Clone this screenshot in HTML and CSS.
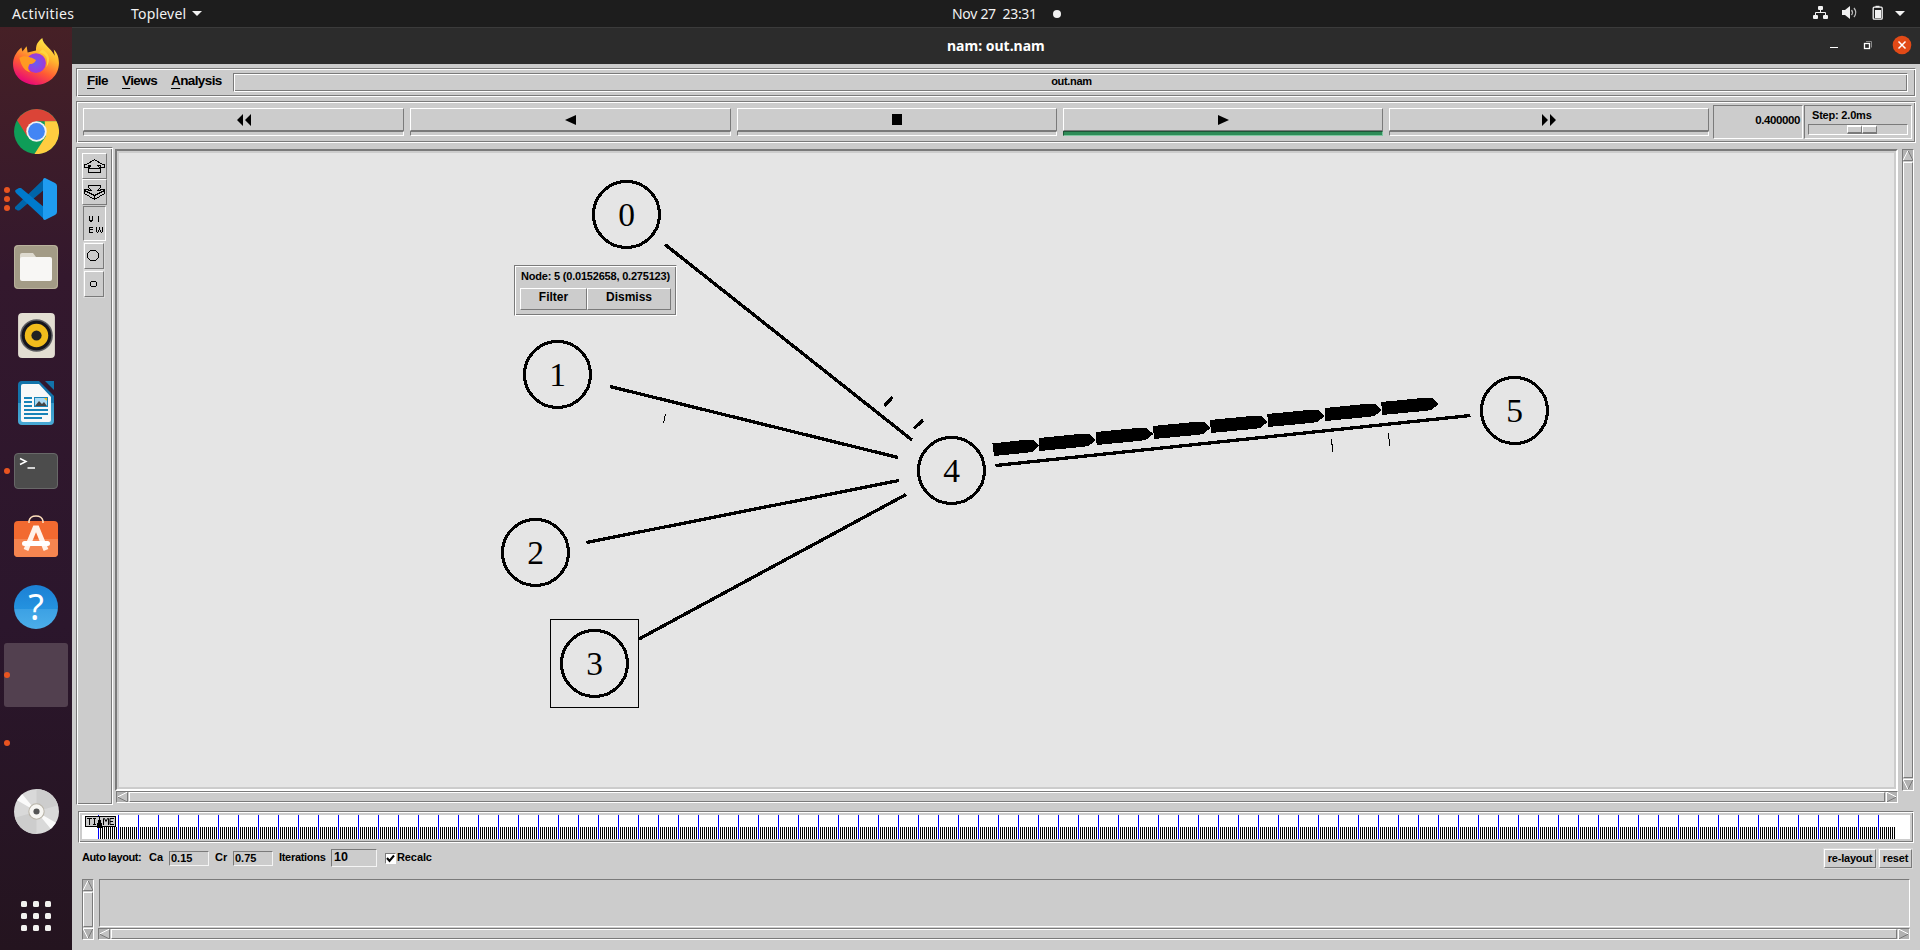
FILE: index.html
```html
<!DOCTYPE html>
<html lang="en">
<head>
<meta charset="utf-8">
<title>nam: out.nam</title>
<link rel="stylesheet" href="styles.css">
</head>
<body>
<header class="topbar">
  <span class="activities">Activities</span>
  <span class="appmenu">Toplevel</span><svg class="caret" width="10" height="5"><path d="M0 0h10L5 5z" fill="#f2f2f2"/></svg>
  <span class="clock">Nov 27&nbsp; 23:31</span><span class="notice"></span>
  <svg class="tray" width="90" height="16" viewBox="0 0 90 16">
    <g fill="#f2f2f2"><rect x="5" y="1" width="5" height="4" rx="1"/><rect x="0" y="10" width="5" height="4" rx="1"/><rect x="10" y="10" width="5" height="4" rx="1"/><path d="M29 5h3l5-4v13l-5-4h-3zM82 6h10l-5 5z"/><rect x="62" y="5" width="6" height="8"/></g>
    <path d="M7.500 5v3M2.500 10V7.500h10V10" fill="none" stroke="#f2f2f2"/>
    <path d="M38.500 5q2 2.500 0 5M41 3q3.500 4.500 0 9" fill="none" stroke="#bbb" stroke-width="1.300"/>
    <rect x="60.200" y="2.200" width="9" height="12" rx="1" fill="none" stroke="#f2f2f2" stroke-width="1.300"/><path d="M62.500 .8h4v1.500h-4z" fill="#f2f2f2"/>
  </svg>
</header>
<div class="desktop">
<nav class="dock">
  <div class="app"><svg class="fox" viewBox="0 0 44 46" width="46" height="48">
    <defs><linearGradient id="ff" x1=".8" y1="0" x2=".3" y2="1"><stop offset="0" stop-color="#fff44f"/><stop offset=".35" stop-color="#ffb72e"/><stop offset=".65" stop-color="#ff5b34"/><stop offset="1" stop-color="#e6007e"/></linearGradient><radialGradient id="fp"><stop offset="0" stop-color="#6a5cf0"/><stop offset="1" stop-color="#a238d8"/></radialGradient></defs>
    <path d="M28 0c-5 4-6 7-6 12l-8 2-1-6-4 5-1-4C2 14 0 20 0 25c0 12 10 20 22 20s22-9 22-21c0-6-2-10-5-13l1 6C36 9 29 7 28 0z" fill="url(#ff)"/>
    <circle cx="22" cy="24" r="9.500" fill="url(#fp)"/><path d="M6 19c5-3 9-1 12 0l4 2c-1 3-4 4-6 4-2 3-2 6 1 8-6-1-9-6-11-14z" fill="#ff9a22"/><path d="M25 14c7 1 9 6 7 14 5-8 2-14-4-17z" fill="#ffd53d"/></svg></div>
  <div class="app"><svg viewBox="-22 -22 44 44" width="45" height="45">
    <circle r="22" fill="#0f9d58"/><path d="M-19-11A22 22 0 0 1 19.600-10H0L-9 5z" fill="#db4437"/><path d="M19.600-10A22 22 0 0 1-2 22L9 5 8-10z" fill="#ffcd40"/><circle r="10" fill="#f1f1f1"/><circle r="8.200" fill="#4285f4"/></svg></div>
  <div class="app"><span class="dots"><i></i><i></i><i></i></span><svg viewBox="0 0 44 44" width="44" height="44">
    <path d="M1 30L31 1v11L6 33q-2 1-3 0l-2-1z" fill="#0065a9"/><path d="M1 14q0-1 4-3h2l24 20v12L2 16z" fill="#007acc"/><path d="M31 1l10 5q2 1 2 3v26q0 2-2 3l-10 5q-2 0-2-2V3q0-2 2-2z" fill="#1f9cf0"/></svg></div>
  <div class="app"><svg viewBox="0 0 44 44" width="44" height="44"><rect width="44" height="44" rx="4" fill="#a39b86"/><rect x=".5" y=".5" width="43" height="43" rx="4" fill="none" stroke="#bab29d"/><path d="M6 10q0-2 2-2h11l3 4v8H6z" fill="#dedacf"/><rect x="6" y="12" width="32" height="24" rx="2" fill="#f8f7f5"/></svg></div>
  <div class="app"><svg viewBox="0 0 36 44" width="37" height="45"><rect width="36" height="44" rx="4" fill="#e3ded2"/><circle cx="18" cy="22" r="16" fill="#5c5c60"/><circle cx="18" cy="22" r="14.500" fill="#15151d"/><circle cx="18" cy="22" r="11.500" fill="#f1bc1c"/><circle cx="18" cy="22" r="5" fill="#222"/></svg></div>
  <div class="app"><svg viewBox="0 0 36 44" width="36" height="44"><defs><linearGradient id="wr" x2="0" y2="1"><stop offset=".49" stop-color="#1373aa"/><stop offset=".5" stop-color="#3498c8"/><stop offset="1" stop-color="#49a9d5"/></linearGradient></defs><path d="M4 0h17l15 15v25q0 4-4 4H4q-4 0-4-4V4q0-4 4-4z" fill="url(#wr)"/><path d="M27 0h9v9z" fill="#1373aa"/><path d="M5 3h16l12 13v23q0 2-2 2H5q-2 0-2-2V5q0-2 2-2z" fill="#f8f8f8"/><path d="M6 17h8M6 21h8M6 25h8M6 29h24M6 33h24M6 37h18" stroke="#1883b8" stroke-width="2"/><rect x="16" y="16" width="14" height="10" fill="#1883b8"/><path d="M17 17h12v8H17z" fill="#a8d8f2"/><path d="M17 25l4-5 3 3 2-2 3 4z" fill="#444"/><path d="M26 17h3v3z" fill="#f5bd18"/></svg></div>
  <div class="app"><span class="dots"><i></i></span><svg viewBox="0 0 44 36" width="44" height="36"><rect x=".5" y=".5" width="43" height="35" rx="3.500" fill="#4c4c4c" stroke="#686868"/><path d="M6 5.500l6 3-6 3M13.500 15H21" fill="none" stroke="#fff" stroke-width="1.500"/></svg></div>
  <div class="app"><svg class="bag" viewBox="0 0 44 44" width="44" height="44"><rect y="7" width="44" height="36" rx="4" fill="#f26a30"/><path d="M0 25h44v14q0 4-4 4H4q-4 0-4-4z" fill="#f58550"/><path d="M15 9V7q1-5 7-5t7 5v2" fill="none" stroke="#ffe0bd" stroke-width="1.500"/><path d="M12 36l9-22h2l9 22" fill="none" stroke="#fff2e9" stroke-width="5"/><rect x="8" y="27" width="28" height="5" rx="2.500" fill="#fff"/></svg></div>
  <div class="app"><span class="help">?</span></div>
  <div class="app active"><span class="dots"><i></i></span></div>
  <div class="app"><span class="dots"><i></i></span></div>
  <div class="app"><svg viewBox="-22 -22 44 44" width="45" height="45"><circle r="22" fill="#d9d9d9"/><path d="M0 0V-22A22 22 0 0 1 21-6zM0 0V22A22 22 0 0 1-21 6z" fill="#cdcdcd"/><path d="M0 0L-19-11-14-17zM0 0L19 11 14 17z" fill="#fafafa"/><circle r="7.500" fill="#f7f6f3" stroke="#b8b3a7"/><circle r="3" fill="#555"/></svg></div>
  <svg class="grid9" width="30" height="30" fill="#f2f1ef"><rect width="6" height="6" rx="1.500"/><rect x="12" width="6" height="6" rx="1.500"/><rect x="24" width="6" height="6" rx="1.500"/><rect y="12" width="6" height="6" rx="1.500"/><rect x="12" y="12" width="6" height="6" rx="1.500"/><rect x="24" y="12" width="6" height="6" rx="1.500"/><rect y="24" width="6" height="6" rx="1.500"/><rect x="12" y="24" width="6" height="6" rx="1.500"/><rect x="24" y="24" width="6" height="6" rx="1.500"/></svg>
</nav>
<main class="window">
  <div class="titlebar"><span class="title">nam: out.nam</span>
    <svg class="winctl" width="83" height="20" viewBox="0 0 83 20"><path d="M0 12.500h8" stroke="#fff"/><path d="M36 6.500h5.500v6" fill="none" stroke="#888"/><rect x="34.500" y="8.500" width="5" height="5" fill="none" stroke="#fff" stroke-width="1.300"/><circle cx="72" cy="10" r="9.300" fill="#e24a17"/><path d="M68.500 6.500l7 7m0-7l-7 7" stroke="#fff" stroke-width="1.500"/></svg>
  </div>
  <div class="menubar groove">
    <span class="menu"><u>F</u>ile</span><span class="menu"><u>V</u>iews</span><span class="menu"><u>A</u>nalysis</span>
    <div class="filename groove">out.nam</div>
  </div>
  <div class="toolbar groove">
    <div class="transport">
      <div class="tb"><div class="btn"><svg width="14" height="12"><path d="M0 6l6-6v12zM8 6l6-6v12z"/></svg></div><div class="strip"></div></div>
      <div class="tb"><div class="btn"><svg width="11" height="10"><path d="M0 5l11-5v10z"/></svg></div><div class="strip"></div></div>
      <div class="tb"><div class="btn"><svg width="10" height="11"><path d="M0 0h10v11H0z"/></svg></div><div class="strip"></div></div>
      <div class="tb"><div class="btn"><svg width="11" height="10"><path d="M11 5L0 0v10z"/></svg></div><div class="strip on"></div></div>
      <div class="tb"><div class="btn"><svg width="14" height="12"><path d="M6 6L0 0v12zM14 6L8 0v12z"/></svg></div><div class="strip"></div></div>
    </div>
    <div class="time sunken">0.400000</div>
    <div class="step sunken"><span>Step: 2.0ms</span><div class="trough sunken"><div class="thumb"><i></i><i></i></div></div></div>
  </div>
  <div class="work">
    <div class="tools groove">
      <div class="tool t1"><svg width="22" height="15" viewBox="0 0 22 15"><path d="M10.500.5l8 5h2v3h-4v-2H14l2.500 4v3h-12v-3l2-4H4.500v2h-4v-3h2zM4.500 9.500h12" /></svg></div>
      <div class="tool t1 down"><svg width="22" height="16" viewBox="0 0 22 16"><path d="M4.500.5h12v2l-3 3h3v-1h4v4l-10 6-10-6v-4h4v1h3l-3-3zM.5 5.500l10 5 10-5M10.500 10v5"/></svg></div>
      <div class="tool t2"><svg width="16" height="20" viewBox="0 0 16 20"><path d="M1.500 1v4l1.500 1.500L4.500 5V1M10.500 1v6M4.500 12.500h-3v5h3M1.500 14.500h3M8.500 12v4l1 1.500 2-3 2 3 1-1.500v-4M11.500 12v3"/></svg></div>
      <div class="tool t3"><svg width="14" height="14" viewBox="0 0 14 14"><circle cx="6" cy="6.500" r="5.500"/></svg></div>
      <div class="tool t3 last"><svg width="14" height="14" viewBox="0 0 14 14"><circle cx="6.500" cy="7" r="3"/></svg></div>
    </div>
    <div class="viewport">
      <div class="canvas">
        <svg class="net" width="1775" height="634" viewBox="119 153 1775 634">
          <g class="edges"><path d="M665 244.500L912 440M610 386.500L898 457.500M586.500 542.500L899 480.500M639 639L906 494.500M995.500 465.500L1470.500 415.500"/><path d="M884.500 406l8-9M914 428.500l9-8.500"/></g>
          <path class="thin" d="M665.500 414l-2 9M1331.500 439v5l1 1v7M1388 433v5l1 1v7"/>
          <g class="nodes"><circle cx="626.500" cy="214.500" r="33"/><circle cx="557.500" cy="374.500" r="33"/><circle cx="535.500" cy="552.500" r="33"/><circle cx="594.500" cy="663.500" r="33"/><circle cx="951.500" cy="470.500" r="33"/><circle cx="1514.500" cy="410.500" r="33"/></g>
          <rect class="thin" x="550.500" y="619.500" width="88" height="88"/>
          <defs><path id="pkt" d="M0 0L41-4H51L57.500 2 50 8 43 9 1 13z"/></defs>
          <path d="M992.500 443.500L1023 440h10l6 6-7 6-8 1-30 3z"/>
          <use href="#pkt" x="1038.500" y="438"/><use href="#pkt" x="1095.700" y="432"/><use href="#pkt" x="1153" y="426"/><use href="#pkt" x="1210" y="420"/><use href="#pkt" x="1267.300" y="414"/><use href="#pkt" x="1324.500" y="408"/><use href="#pkt" x="1381.200" y="402"/>
          <g class="ids"><text x="626.500" y="226">0</text><text x="557.500" y="386">1</text><text x="535.500" y="564">2</text><text x="594.500" y="675">3</text><text x="951.500" y="482">4</text><text x="1514.500" y="422">5</text></g>
        </svg>
        <div class="popup groove"><span class="ptext">Node: 5 (0.0152658, 0.275123)</span><div class="pbtns"><button class="pf">Filter</button><button class="pd">Dismiss</button></div></div>
      </div>
      <div class="hscroll"><svg width="11" height="10"><path class="lo" d="M10.500 0v10L.5 5"/><path class="hi" d="M.5 5l10-5"/></svg><div class="bar"></div><svg width="11" height="10"><path class="lo" d="M.5 10l10-5"/><path class="hi" d="M.5 10V0l10 5"/></svg></div>
    </div>
    <div class="vscroll"><svg width="10" height="11"><path class="lo" d="M5 .5l5 10H0"/><path class="hi" d="M0 10.500l5-10"/></svg><div class="bar"></div><svg width="10" height="11"><path class="lo" d="M10 .5l-5 10"/><path class="hi" d="M10 .5H0l5 10"/></svg></div>
  </div>
  <div class="timeline groove"><div class="scale"><div class="minor"></div><div class="major"></div>
    <svg class="timetag" width="31" height="12" viewBox="0 0 31 12"><rect x=".5" y=".5" width="30" height="10" fill="#ccc" stroke="#000"/><path d="M2 2.500h5M4.500 2v7M8 2.500h3M9.500 2v7M8 8.500h3M18.500 9V2.500h1l1.500 3 1.500-3h1V9M29 2.500h-4v6h4M25 5.500h3" fill="none" stroke="#000"/><path d="M14 1h1v3h1v3h1v5h-5V7h1V4h1z"/></svg></div></div>
  <div class="layoutrow">
    <span class="l1">Auto layout:</span><span class="l2">Ca</span><span class="entry">0.15</span><span class="l3">Cr</span><span class="entry">0.75</span><span class="l4">Iterations</span><span class="entry big">10</span>
    <span class="check"><svg width="9" height="9"><path d="M1 4l2.500 3L8 1.500" fill="none" stroke="#000" stroke-width="2"/></svg></span><span class="l5">Recalc</span>
    <button class="rel">re-layout</button><button class="res">reset</button>
  </div>
  <div class="bottom">
    <div class="vscroll"><svg width="10" height="11"><path class="lo" d="M5 .5l5 10H0"/><path class="hi" d="M0 10.500l5-10"/></svg><div class="bar"></div><svg width="10" height="11"><path class="lo" d="M10 .5l-5 10"/><path class="hi" d="M10 .5H0l5 10"/></svg></div>
    <div class="notes"><div class="text sunken"></div>
      <div class="hscroll"><svg width="11" height="10"><path class="lo" d="M10.500 0v10L.5 5"/><path class="hi" d="M.5 5l10-5"/></svg><div class="bar"></div><svg width="11" height="10"><path class="lo" d="M.5 10l10-5"/><path class="hi" d="M.5 10V0l10 5"/></svg></div></div>
  </div>
</main>
</div>
</body>
</html>
```
FILE: styles.css
```css
* { box-sizing: border-box; }
body { margin: 0; width: 1920px; height: 950px; overflow: hidden; font: bold 12px "Liberation Sans", sans-serif; color: #000; background: #ccc; }
svg { display: block; flex: none; }
span, button { white-space: nowrap; }
.groove { border: 1px solid; border-color: #7a7a7a #fff #fff #7a7a7a; box-shadow: inset 1px 1px #fff, inset -1px -1px #7a7a7a; }
.sunken { border: 1px solid; border-color: #7a7a7a #fff #fff #7a7a7a; }

.topbar { height: 27px; background: #1d1d1d; color: #f2f2f2; display: flex; align-items: center; font: 14px/27px "Noto Sans", sans-serif; }
.activities { width: 119px; padding-left: 12px; letter-spacing: .4px; }
.appmenu { margin-left: 12px; width: 62px; letter-spacing: .2px; }
.caret { margin-left: -1px; }
.clock { margin-left: 750px; width: 101px; letter-spacing: -.3px; }
.notice { width: 8px; height: 8px; border-radius: 50%; background: #f2f2f2; }
.tray { margin-left: 752px; margin-top: -1px; overflow: visible; }

.desktop { display: flex; height: 923px; }
.dock { width: 72px; padding: 4px 4px 0; display: flex; flex-direction: column; gap: 4px; align-items: center; background: linear-gradient(#462026, #33182d 27%, #2b162c 65%, #24141f); }
.app { position: relative; width: 64px; height: 64px; flex: none; display: flex; align-items: center; justify-content: center; border-radius: 3px; }
.fox { margin-bottom: 2px; }
.bag { margin-bottom: 6px; }
.active { background: #52404f; }
.dots { position: absolute; left: 0; top: 0; height: 64px; display: flex; flex-direction: column; justify-content: center; gap: 3px; }
.dots i { width: 6px; height: 6px; border-radius: 50%; background: #e95420; }
.help { width: 44px; height: 44px; border-radius: 50%; background: linear-gradient(#1c80d4, #2492df 54%, #3ca1e4 55%, #4caee9); color: #fff; font: 36px/44px "Noto Sans", sans-serif; text-align: center; }
.grid9 { margin-top: 54px; }

.window { width: 1848px; background: #ccc; }
.titlebar { height: 37px; background: #2c2c2c; border-top: 1px solid #3b3b3b; display: flex; align-items: center; color: #fff; }
.title { margin-left: 875px; width: 883px; font: bold 14px/36px "Noto Sans", sans-serif; }
.winctl { overflow: visible; margin-top: -2px; }

.menubar { margin: 4px 4px 0; height: 29px; padding: 4px 7px 4px 10px; display: flex; font-size: 14px; line-height: 15px; }
.menu { font-size: 13.500px; letter-spacing: -.6px; }
.menu:nth-child(1) { width: 35px; }
.menu:nth-child(2) { width: 49px; }
.menu:nth-child(3) { width: 62px; }
.menu u { text-underline-offset: 3px; text-decoration-thickness: 1px; }
.filename { flex: 1; text-align: center; font-size: 11px; line-height: 15px; letter-spacing: -.3px; padding-left: 2px; }

.toolbar { margin: 4px 4px 0; height: 42px; padding: 3px 3px 3px 6px; display: flex; }
.transport { width: 1626px; height: 28px; margin-top: 3px; display: grid; grid-template-columns: 321px 321px 320px 320px 320px; gap: 6px; }
.btn { height: 23px; border: 1px solid; border-color: #fff #7a7a7a #7a7a7a #fff; display: flex; align-items: center; justify-content: center; }
.strip { height: 5px; border: 1px solid; border-color: #7a7a7a #fff #fff #7a7a7a; }
.strip.on { background: #2e8b57; border-color: #1d5536; border-bottom-color: #80c6a0; border-right-color: #80c6a0; }
.time { width: 90px; height: 34px; margin-left: 4px; text-align: right; padding-right: 2px; line-height: 29px; font-size: 11.500px; letter-spacing: -.4px; }
.step { width: 108px; height: 34px; margin-left: 1px; padding: 4px 3px 0; font-size: 11px; line-height: 10px; letter-spacing: -.2px; }
.step span { display: block; padding-left: 4px; height: 14px; }
.trough { width: 100px; height: 11px; padding-left: 38px; }
.thumb { display: flex; width: 30px; height: 9px; }
.thumb i { flex: 1; border: 1px solid; border-width: 2px 1px 2px 1px; border-color: #fff #7a7a7a #7a7a7a #fff; }

.work { margin: 4px 6px 0 4px; height: 658px; display: flex; }
.tools { width: 37px; height: 658px; padding: 5px; display: flex; flex-direction: column; }
.tool { border: 1px solid; border-color: #fff #7a7a7a #7a7a7a #fff; display: flex; align-items: center; justify-content: center; flex: none; }
.tool svg { fill: none; stroke: #000; shape-rendering: crispEdges; }
.t1 { width: 25px; height: 26px; }
.down { padding-top: 2px; }
.t2 { width: 23px; height: 35px; margin: 1px 0 2px 1px; border-color: #7a7a7a #fff #fff #7a7a7a; padding: 2px 0 0 2px; }
.t3 { width: 20px; height: 26px; margin: 0 0 2px 2px; box-shadow: 0 0 0 1px #d9d9d9; }
.viewport { width: 1783px; margin: 2px 0 0 2px; }
.canvas { position: relative; height: 642px; border: 2px solid; border-color: #7a7a7a #fff #fff #7a7a7a; padding: 2px; }
.net { background: #e5e5e5; shape-rendering: crispEdges; }
.edges { stroke: #000; stroke-width: 3.300; fill: none; }
.thin { stroke: #000; fill: none; }
.nodes { stroke: #000; stroke-width: 3.100; fill: none; }
.ids { font: 33.500px "Liberation Serif", serif; text-anchor: middle; }
.popup { position: absolute; left: 397px; top: 114px; width: 163px; height: 51px; background: #ccc; padding: 4px 5px; }
.ptext { display: block; height: 18px; padding-left: 1px; line-height: 13px; font-size: 11px; letter-spacing: -.2px; }
button { font: bold 12px "Liberation Sans", sans-serif; background: #ccc; border: 1px solid; border-color: #fff #7a7a7a #7a7a7a #fff; padding: 0; color: #000; }
.pbtns { display: flex; height: 22px; }
.pbtns button { line-height: 16px; padding-bottom: 4px; }
.pf { width: 67px; }
.pd { width: 84px; }

.hscroll, .vscroll { display: flex; border: 1px solid; border-color: #7a7a7a #fff #fff #7a7a7a; background: #ccc; }
.hscroll { height: 12px; gap: 1px; }
.viewport .hscroll { margin-left: 1px; }
.vscroll { width: 12px; flex-direction: column; gap: 1px; }
.work .vscroll { height: 642px; margin: 2px 0 0 4px; }
.bar { flex: 1; border: 1px solid; border-color: #fff #7a7a7a #7a7a7a #fff; }
.hscroll svg, .vscroll svg { background: #b1b1b1; fill: #c2c2c2; }
.hi { stroke: #fff; fill: none; }
.lo { stroke: #7a7a7a; }

.timeline { margin: 6px 6px 0; height: 32px; padding: 3px; }
.scale { position: relative; height: 24px; background: #fff; padding: 12px 0 0 16px; }
.minor { width: 1797px; height: 12px; background: repeating-linear-gradient(90deg, #000 0 1px, #fff 1px 2px); }
.major { position: absolute; left: 16px; top: 0; width: 1781px; height: 24px; background: repeating-linear-gradient(90deg, #00f 0 1px, transparent 1px 20px); }
.timetag { position: absolute; left: 3px; top: 1px; }

.layoutrow { height: 36px; padding: 6px 8px 0 10px; display: flex; align-items: flex-start; font-size: 11px; line-height: 16px; }
.l1 { width: 67px; letter-spacing: -.4px; }
.l2 { width: 20px; }
.l3 { width: 18px; margin-left: 6px; }
.l4 { width: 52px; margin-left: 6px; letter-spacing: -.3px; }
.entry { width: 40px; height: 15px; margin-top: 2px; line-height: 12px; padding-left: 1px; border: 1px solid; border-color: #7a7a7a #f4f4f4 #f4f4f4 #7a7a7a; }
.big { width: 46px; height: 18px; margin-top: 0; line-height: 14px; font-size: 12.500px; padding-left: 2px; }
.check { width: 11px; height: 11px; margin: 4px 1px 0 8px; background: #fff; border: 1px solid; border-color: #7a7a7a #fff #fff #7a7a7a; }
.l5 { flex: 1; letter-spacing: -.1px; }
.layoutrow button { height: 19px; font-size: 11px; letter-spacing: -.2px; padding-bottom: 2px; box-shadow: 0 0 0 1px #d9d9d9; }
.rel { width: 52px; }
.res { width: 33px; margin-left: 3px; }

.bottom { height: 61px; margin: 0 10px; display: flex; gap: 4px; }
.notes { flex: 1; }
.text { height: 48px; margin: 0 0 1px 1px; }
```
